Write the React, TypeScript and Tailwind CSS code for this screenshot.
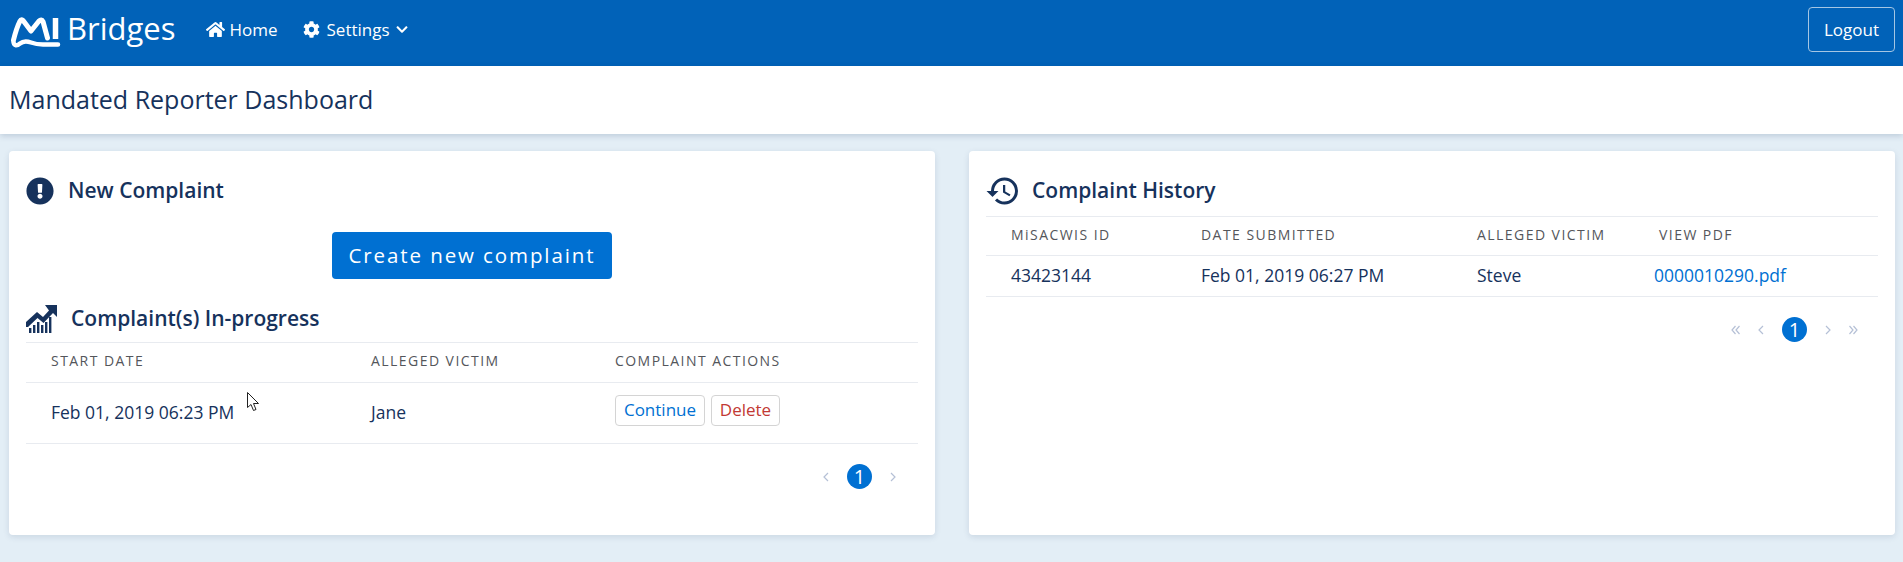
import { FaChevronDown, FaCog, FaExclamationCircle, FaHome } from "react-icons/fa";
import { MdHistory } from "react-icons/md";

const font = { fontFamily: '"Open Sans", sans-serif' };

const Logo = () => (
  <svg width="50" height="32" viewBox="0 0 50 32" fill="none" className="mt-[6px] shrink-0">
    <path d="M2.5 23 C4 17 7 8 9 4 C10 2 11.5 2.5 12.5 4 L20 14 L28 4 C29.5 2.5 31 2.5 32 4.5 L36.5 21" stroke="white" strokeWidth="5" strokeLinecap="round" strokeLinejoin="round" />
    <path d="M44.5 1 V22" stroke="white" strokeWidth="5.5" />
    <path d="M2.5 25 C3 29 6 29 9 26.5 C12 24 16 24 20 25.5 C24 27 28 27.5 32 27.5 H47" stroke="white" strokeWidth="4.5" strokeLinecap="round" />
  </svg>
);

const TrendIcon = () => (
  <svg width="31" height="28" viewBox="0 0 31 28" className="shrink-0" fill="#16325c">
    <path d="M0 17 L11 7 L17 12 L23 5.5 L19 0 H31 V12 L27 8 L17.5 18 L11.5 13 L2 22 H0 Z" />
    <rect x="3" y="23" width="2.4" height="5" />
    <rect x="7" y="20" width="2.4" height="8" />
    <rect x="11" y="17" width="2.4" height="11" />
    <rect x="15" y="20" width="2.4" height="8" />
    <rect x="19" y="17" width="2.4" height="11" />
    <rect x="23" y="12" width="2.4" height="16" />
  </svg>
);

const Chevron = ({ dir, double }: { dir: "left" | "right"; double?: boolean }) => (
  <svg width={double ? 9 : 8} height="10" viewBox={double ? "0 0 9 10" : "0 0 8 10"} fill="none" stroke="#b5c0d6" strokeWidth="1.2">
    {dir === "left" ? (
      double ? (
        <path d="M4.5 1 L1 5 L4.5 9 M8.5 1 L5 5 L8.5 9" />
      ) : (
        <path d="M6 1 L2 5 L6 9" />
      )
    ) : double ? (
      <path d="M0.5 1 L4 5 L0.5 9 M4.5 1 L8 5 L4.5 9" />
    ) : (
      <path d="M2 1 L6 5 L2 9" />
    )}
  </svg>
);

const Pager = ({ full }: { full?: boolean }) => (
  <div className="flex items-center gap-[17px]">
    {full && <Chevron dir="left" double />}
    <Chevron dir="left" />
    <span className="flex h-[25px] w-[25px] items-center justify-center rounded-full bg-[#0070d2] text-[20px] leading-none text-white">1</span>
    <Chevron dir="right" />
    {full && <Chevron dir="right" double />}
  </div>
);

const th = "border-b border-[#e8ebf0] pb-[4px] pl-[25px] text-left text-[14px] font-normal tracking-[1.45px] text-[#54565b]";

export default function App() {
  return (
    <div style={font} className="relative min-h-[562px] bg-[#e3eef6] text-[#16325c]">
      {/* Nav */}
      <nav className="flex h-[66px] items-center bg-[#0162b8] pb-[7px] pl-[11px] pr-2 text-white">
        <Logo />
        <span className="-mt-[3px] ml-[6px] text-[31px] leading-none">Bridges</span>
        <a className="ml-[30px] flex items-center gap-[5px] text-[17px]">
          <FaHome className="h-[19px] w-[19px]" /> Home
        </a>
        <a className="ml-[25px] flex items-center gap-[7px] text-[17px]">
          <FaCog className="h-[17px] w-[17px]" />
          <span className="flex items-center gap-[5px]">
            Settings <FaChevronDown className="h-[13px] w-[14px]" />
          </span>
        </a>
        <button className="ml-auto h-[45px] w-[87px] rounded border border-[#a5c6e4] text-[17px]">Logout</button>
      </nav>

      {/* Page title */}
      <div className="flex h-[68px] items-center bg-white pl-[9px] text-[25px] shadow-[0_2px_6px_rgba(22,50,92,0.18)]">
        Mandated Reporter Dashboard
      </div>

      <div className="flex gap-[34px] pl-[9px] pr-2 pt-[17px]">
        {/* New complaint */}
        <section className="h-[384px] flex-1 rounded bg-white px-[17px] pt-[25px] shadow-[0_2px_6px_rgba(22,50,92,0.12)]">
          <div className="flex h-[29px] items-center gap-[14px]">
            <FaExclamationCircle className="h-[28px] w-[28px]" />
            <h2 className="text-[21px] font-semibold">New Complaint</h2>
          </div>
          <div className="mt-[27px] flex justify-center">
            <button className="h-[47px] w-[280px] rounded bg-[#0070d2] text-[20.5px] tracking-[1.9px] text-white">Create new complaint</button>
          </div>
          <div className="mt-[25px] flex h-[29px] items-center gap-[14px]">
            <TrendIcon />
            <h2 className="text-[21px] font-semibold">Complaint(s) In-progress</h2>
          </div>
          <table className="mt-[9px] w-full table-fixed border-t border-[#e8ebf0]">
            <thead>
              <tr className="h-[40px]">
                <th className={`${th} w-[320px]`}>START DATE</th>
                <th className={`${th} w-[244px]`}>ALLEGED VICTIM</th>
                <th className={th}>COMPLAINT ACTIONS</th>
              </tr>
            </thead>
            <tbody>
              <tr className="h-[61px] border-b border-[#e8ebf0] text-[17.5px]">
                <td className="pb-[2px] pl-[25px]">Feb 01, 2019 06:23 PM</td>
                <td className="pb-[2px] pl-[25px]">Jane</td>
                <td className="pb-[6px] pl-[25px]">
                  <div className="flex gap-[6px] text-[17px]">
                    <button className="h-[31px] w-[90px] rounded border border-[#d4d4d4] text-[#0070d2]">Continue</button>
                    <button className="h-[31px] w-[69px] rounded border border-[#d4d4d4] text-[#c23934]">Delete</button>
                  </div>
                </td>
              </tr>
            </tbody>
          </table>
          <div className="mt-[20px] flex justify-end pr-[21px]">
            <Pager />
          </div>
        </section>

        {/* History */}
        <section className="h-[384px] flex-1 rounded bg-white px-[17px] pt-[25px] shadow-[0_2px_6px_rgba(22,50,92,0.12)]">
          <div className="flex h-[29px] items-center gap-[11px]">
            <MdHistory className="-ml-[1px] h-[36px] w-[36px]" />
            <h2 className="text-[21px] font-semibold">Complaint History</h2>
          </div>
          <table className="mt-[11px] w-full table-fixed border-t border-[#e8ebf0]">
            <thead>
              <tr className="h-[39px]">
                <th className={`${th} w-[190px]`}>MiSACWIS ID</th>
                <th className={`${th} w-[276px]`}>DATE SUBMITTED</th>
                <th className={`${th} w-[182px]`}>ALLEGED VICTIM</th>
                <th className={th}>VIEW PDF</th>
              </tr>
            </thead>
            <tbody>
              <tr className="h-[41px] border-b border-[#e8ebf0] text-[17.5px]">
                <td className="pb-[2px] pl-[25px]">43423144</td>
                <td className="pb-[2px] pl-[25px]">Feb 01, 2019 06:27 PM</td>
                <td className="pb-[2px] pl-[25px]">Steve</td>
                <td className="pb-[2px] pl-[20px] text-[#0070d2]">0000010290.pdf</td>
              </tr>
            </tbody>
          </table>
          <div className="mt-[20px] flex justify-end pr-[20px]">
            <Pager full />
          </div>
        </section>
      </div>

      {/* mouse pointer caught in the capture */}
      <svg className="absolute left-[247px] top-[392px]" width="13" height="20" viewBox="0 0 13 20" fill="white" stroke="#222" strokeWidth="1">
        <path d="M0.5 0.5 V15.5 L4 12.5 L6.5 18.5 L9 17.5 L6.5 11.5 H11.5 Z" />
      </svg>
    </div>
  );
}
